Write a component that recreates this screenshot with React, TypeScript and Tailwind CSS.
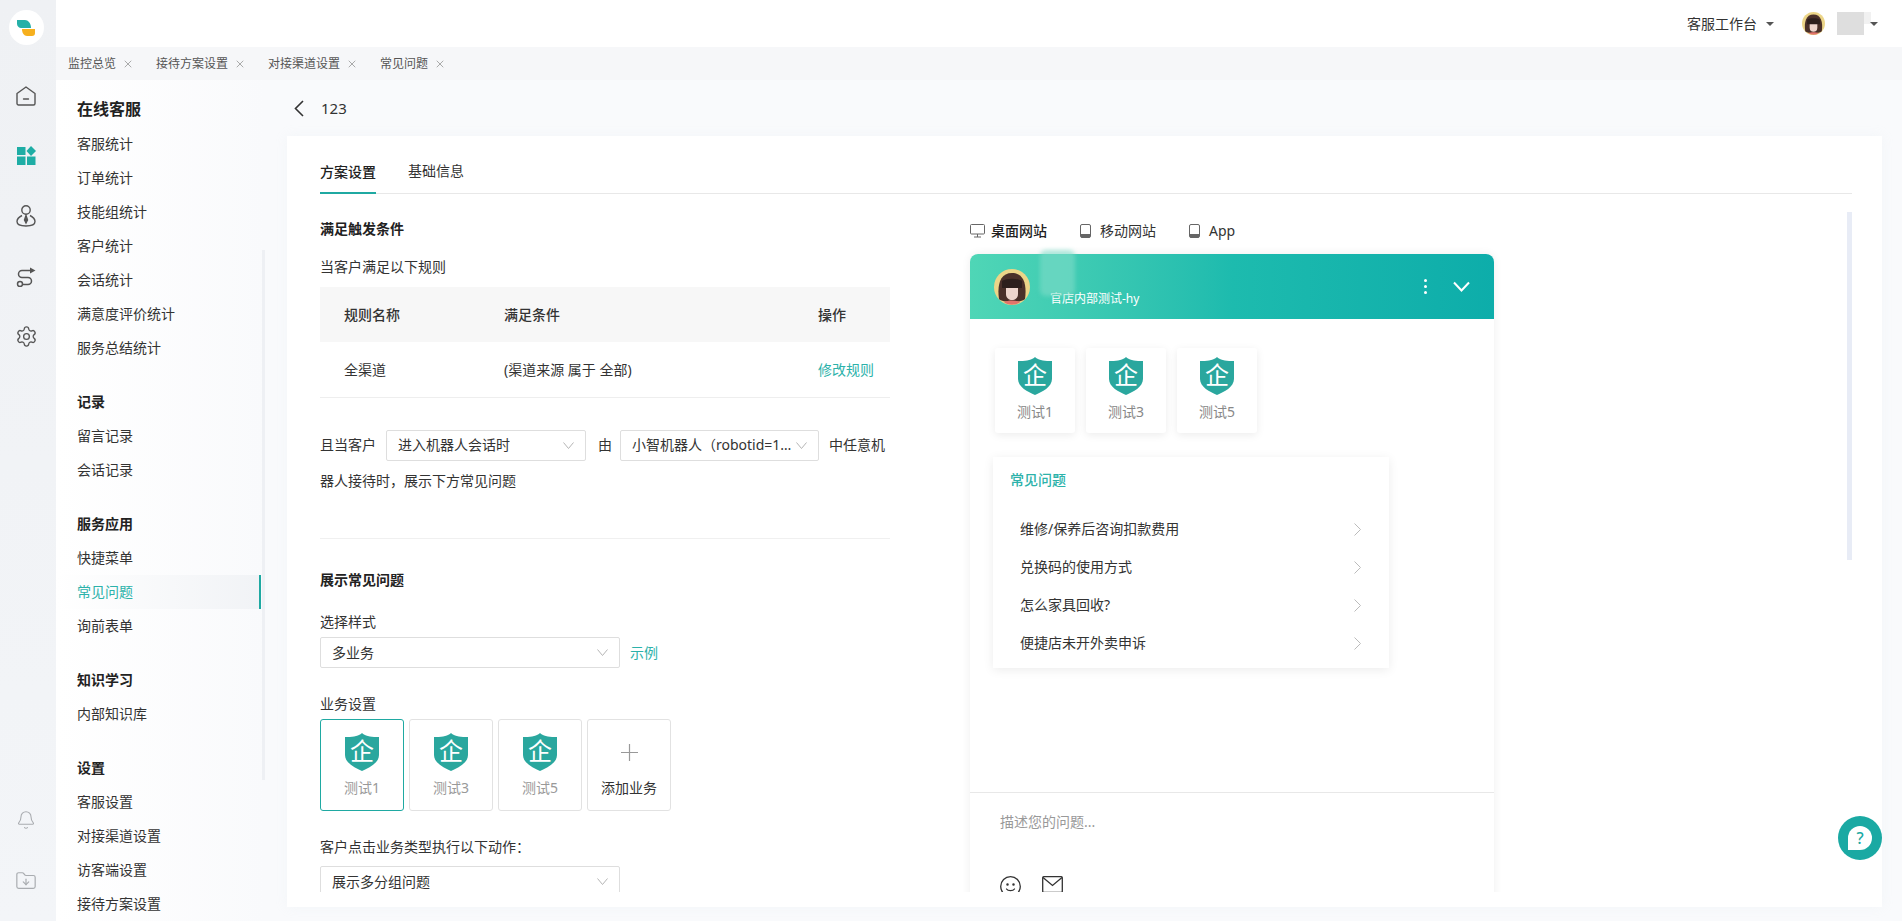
import React from 'react'
import { Bell, FolderDown, Settings, X } from 'lucide-react'

const SIDE_GROUPS = [
  { title: '记录', items: ['留言记录', '会话记录'] },
  { title: '服务应用', items: ['快捷菜单', '常见问题', '询前表单'] },
  { title: '知识学习', items: ['内部知识库'] },
  { title: '设置', items: ['客服设置', '对接渠道设置', '访客端设置', '接待方案设置'] },
]

const STAT_ITEMS = ['客服统计', '订单统计', '技能组统计', '客户统计', '会话统计', '满意度评价统计', '服务总结统计']
const PAGE_TABS = ['监控总览', '接待方案设置', '对接渠道设置', '常见问题']
const FAQ_ITEMS = ['维修/保养后咨询扣款费用', '兑换码的使用方式', '怎么家具回收?', '便捷店未开外卖申诉']

const Shield = () => (
  <div className="relative w-[34px] h-[38px] shrink-0 flex items-center justify-center">
    <svg width="34" height="38" viewBox="0 0 34 38" className="absolute inset-0">
      <path d="M17 0C20 3 27 4.5 34 4V22C34 30 24 35 17 38C10 35 0 30 0 22V4C7 4.5 14 3 17 0Z" fill="#2aa79e" />
    </svg>
    <span className="relative -mt-[3px] text-[24px] leading-[30px] text-white">企</span>
  </div>
)

const Avatar = ({ size }: { size: number }) => (
  <svg width={size} height={size} viewBox="0 0 36 36" className="shrink-0">
    <circle cx="18" cy="18" r="18" fill="#ecd588" />
    <path d="M5 30C3 16 6 4 18 4C30 4 33 16 31 30C28 34 8 34 5 30Z" fill="#4a3029" />
    <path d="M12 18H24V25C24 29 21 31 18 31C15 31 12 29 12 25Z" fill="#eed5cc" />
    <path d="M8 12C13 9 23 9 28 12V19H8Z" fill="#2d1f1c" />
    <path d="M10 33C14 31 22 31 26 33C23 36.5 13 36.5 10 33Z" fill="#e2746c" />
  </svg>
)

const Chevron = () => (
  <svg width="11" height="7" viewBox="0 0 11 7" fill="none" stroke="#b5b5b5" className="shrink-0">
    <path d="M.5.5 5.5 6.5 10.5.5" />
  </svg>
)

const Caret = ({ className }: { className: string }) => (
  <span className={`block w-0 h-0 border-x-[4px] border-x-transparent border-t-[4px] border-t-[#555] ${className}`} />
)

const SelectBox = ({ text, className }: { text: string; className: string }) => (
  <span className={`flex items-center justify-between h-[31px] border border-[#dedede] rounded-[2px] pl-[11px] pr-[11px] leading-[20px] ${className}`}>
    <span className="truncate">{text}</span>
    <span className="ml-[2px] shrink-0"><Chevron /></span>
  </span>
)

const Phone = () => (
  <svg width="11" height="14" viewBox="0 0 11 14" className="shrink-0">
    <rect x=".5" y=".5" width="10" height="13" rx="1.5" fill="none" stroke="#666" />
    <rect x="1" y="10" width="9" height="3.5" fill="#666" />
  </svg>
)

const RailIcons = () => (
  <div className="flex flex-col items-center">
    <svg width="20" height="20" viewBox="0 0 20 20" fill="none" stroke="#555" strokeWidth="1.4" strokeLinejoin="round" strokeLinecap="round" className="mt-[41px]">
      <path d="M10 1 19 7.5V17.5A1.5 1.5 0 0 1 17.5 19H2.5A1.5 1.5 0 0 1 1 17.5V7.5Z" />
      <path d="M7.5 13H12.5" />
    </svg>
    <svg width="19" height="19" viewBox="0 0 19 19" fill="#1eada5" className="mt-[40px]">
      <rect x="0" y="1" width="8.5" height="8" />
      <path d="M14 0 19 5 14 10 9.5 5Z" />
      <rect x="0" y="10.5" width="8.5" height="8.5" />
      <rect x="10" y="10.5" width="8.5" height="8.5" />
    </svg>
    <svg width="20" height="22" viewBox="0 0 20 22" fill="none" stroke="#555" strokeWidth="1.4" className="mt-[40px]">
      <circle cx="10" cy="5" r="4.2" />
      <path d="M6 10.5C3 12 1 14.5 1 16.5 1 19.5 5 21 10 21 15 21 19 19.5 19 16.5 19 14.5 17 12 14 10.5" />
      <path d="M10 10.5 8.5 15 10 18 11.5 15Z" fill="#555" />
    </svg>
    <svg width="20" height="20" viewBox="0 0 20 20" fill="none" stroke="#555" strokeWidth="1.5" className="mt-[40px]">
      <path d="M14 0.5 19.5 3.5 14 6.5Z" fill="#555" stroke="none" />
      <path d="M14 3.5H6A3.5 3.5 0 0 0 6 10.5H12A3.5 3.5 0 0 1 12 17.5H7" />
      <circle cx="4" cy="17" r="2.5" />
    </svg>
    <Settings size={23} strokeWidth={1.4} color="#555" className="mt-[38px]" />
  </div>
)

export default function App() {
  return (
    <div className="relative flex w-[1902px] h-[921px] overflow-hidden bg-[#f9fafc] text-[14px] leading-[20px] text-[#333] font-['Noto_Sans','Noto_Sans_CJK_SC','Liberation_Sans',sans-serif]">
      {/* Left rail */}
      <div className="w-[56px] shrink-0 pr-[4px] flex flex-col items-center bg-gradient-to-b from-[#eff1f4] to-[#f3f5f8]">
        <div className="mt-[10px] w-[35px] h-[35px] rounded-full bg-white flex items-center justify-center">
          <svg width="18" height="16" viewBox="0 0 18 16">
            <path d="M0 0H8C11 0 14 3 14 8H4C2 8 0 6 0 4Z" fill="#26b0a8" />
            <path d="M5 9H18V13C18 15 17 16 15 16H10C7 16 5 13 5 9Z" fill="#f6b01e" />
          </svg>
        </div>
        <RailIcons />
        <Bell size={20} strokeWidth={1.3} color="#a9acb0" className="mt-auto" />
        <FolderDown size={22} strokeWidth={1.3} color="#a9acb0" className="mt-[40px] mb-[29px]" />
      </div>

      <div className="flex-1 flex flex-col min-w-0">
        {/* Top bar */}
        <div className="h-[47px] shrink-0 bg-white flex items-center justify-end pr-[24px]">
          <span>客服工作台</span>
          <Caret className="ml-[9px]" />
          <span className="ml-[28px]"><Avatar size={23} /></span>
          <span className="ml-[12px] w-[27px] h-[23px] bg-[#dedede]" />
          <span className="w-[7px] h-[12px] bg-[#f1f1f1] -mt-[11px]" />
          <Caret className="ml-[-1px]" />
        </div>

        {/* Page tabs */}
        <div className="h-[33px] shrink-0 bg-[#f6f7f9] flex items-center pl-[12px] text-[12px] text-[#555]">
          {PAGE_TABS.map((tab) => (
            <div key={tab} className="flex items-center mr-[22px]">
              <span>{tab}</span>
              <X size={12} strokeWidth={1.4} color="#888" className="ml-[6px]" />
            </div>
          ))}
        </div>

        <div className="flex-1 flex min-h-0">
          {/* Sidebar */}
          <div className="relative w-[209px] shrink-0 pt-[12px] bg-gradient-to-r from-white to-[#f9fafc]">
            <div className="h-[34px] pl-[21px] flex items-center text-[16px] font-bold text-[#222]">在线客服</div>
            <div className="mt-[1px] mb-[1px]">
              {STAT_ITEMS.map((item) => (
                <div key={item} className="h-[34px] pl-[21px] flex items-center">{item}</div>
              ))}
            </div>
            {SIDE_GROUPS.map((group) => (
              <div key={group.title} className="mt-[20px]">
                <div className="h-[34px] pl-[21px] flex items-center font-bold text-[#222]">{group.title}</div>
                {group.items.map((item) =>
                  item === '常见问题' ? (
                    <div key={item} className="h-[34px] w-[205px] pl-[21px] flex items-center text-[#2cb2aa] border-r-[2px] border-[#1fa9a2] bg-gradient-to-r from-white to-[#f1f3f6]">
                      {item}
                    </div>
                  ) : (
                    <div key={item} className="h-[34px] pl-[21px] flex items-center">{item}</div>
                  )
                )}
              </div>
            ))}
            <div className="absolute right-0 top-[170px] w-[3px] h-[530px] bg-[#eef0f4]" />
          </div>

          {/* Main */}
          <div className="flex-1 min-w-0 pl-[22px] pr-[20px]">
            <div className="h-[56px] flex items-center pl-[7px]">
              <svg width="10" height="17" viewBox="0 0 10 17" fill="none" stroke="#333" strokeWidth="1.6">
                <path d="M9 1 1.5 8.5 9 16" />
              </svg>
              <span className="ml-[17px] text-[15px] pb-[1px]">123</span>
            </div>

            <div className="h-[771px] bg-white pl-[33px] pr-[30px] shadow-[0_0_12px_rgba(200,210,225,0.12)]">
              <div className="h-[58px] flex items-end gap-[32px] border-b border-[#e8e8e8]">
                <div className="h-[33px] pt-[1px] -mb-px border-b-[2px] border-[#1fa9a2] text-[#222] font-medium">方案设置</div>
                <div className="h-[33px] pt-[1px]">基础信息</div>
              </div>

              <div className="flex h-[698px] overflow-hidden">
                {/* Rule form */}
                <div className="w-[570px] shrink-0">
                  <div className="mt-[25px] font-bold text-[#222]">满足触发条件</div>
                  <div className="mt-[18px]">当客户满足以下规则</div>
                  <div className="mt-[10px]">
                    <div className="h-[55px] bg-[#f7f7f7] flex items-center pl-[24px] font-medium">
                      <span className="w-[160px]">规则名称</span>
                      <span className="w-[314px]">满足条件</span>
                      <span>操作</span>
                    </div>
                    <div className="h-[56px] border-b border-[#eeeeee] flex items-center pl-[24px]">
                      <span className="w-[160px]">全渠道</span>
                      <span className="w-[314px]">(渠道来源 属于 全部)</span>
                      <span className="text-[#2cb2aa]">修改规则</span>
                    </div>
                  </div>

                  <div className="mt-[29px] flex flex-wrap items-center">
                    <span className="leading-[36px]">且当客户</span>
                    <SelectBox text="进入机器人会话时" className="w-[200px] ml-[10px] mr-[12px]" />
                    <span>由</span>
                    <SelectBox text="小智机器人（robotid=123456）" className="w-[199px] ml-[8px] mr-[10px]" />
                    <span>中任意机</span>
                    <span className="w-full leading-[36px]">器人接待时，展示下方常见问题</span>
                  </div>

                  <div className="mt-[39px] h-px bg-[#f0f0f0]" />

                  <div className="mt-[31px] font-bold text-[#222]">展示常见问题</div>
                  <div className="mt-[22px]">选择样式</div>
                  <div className="mt-[5px] flex items-center">
                    <SelectBox text="多业务" className="w-[300px]" />
                    <span className="ml-[10px] text-[#2cb2aa]">示例</span>
                  </div>

                  <div className="mt-[26px]">业务设置</div>
                  <div className="mt-[5px] flex gap-[5px]">
                    {['测试1', '测试3', '测试5'].map((name, i) => (
                      <div key={name} className={`w-[84px] h-[92px] rounded-[3px] border flex flex-col items-center pt-[13px] ${i === 0 ? 'border-[#1fa9a2]' : 'border-[#e2e2e2]'}`}>
                        <Shield />
                        <span className="mt-[7px] text-[#999]">{name}</span>
                      </div>
                    ))}
                    <div className="w-[84px] h-[92px] rounded-[3px] border border-[#e2e2e2] flex flex-col items-center pt-[13px]">
                      <div className="h-[38px] flex items-center">
                        <svg width="17" height="17" viewBox="0 0 17 17" stroke="#999" strokeWidth="1.2">
                          <path d="M8.5 0V17M0 8.5H17" />
                        </svg>
                      </div>
                      <span className="mt-[7px]">添加业务</span>
                    </div>
                  </div>

                  <div className="mt-[26px]">客户点击业务类型执行以下动作：</div>
                  <div className="mt-[9px]">
                    <SelectBox text="展示多分组问题" className="w-[300px]" />
                  </div>
                </div>

                {/* Preview */}
                <div className="ml-[80px] w-[524px] shrink-0">
                  <div className="mt-[27px] flex items-center h-[20px]">
                    <svg width="15" height="14" viewBox="0 0 15 14" fill="none" stroke="#666" className="shrink-0">
                      <rect x=".5" y=".5" width="14" height="9.5" rx="1" />
                      <path d="M4 13H11M7.5 10V13" />
                    </svg>
                    <span className="ml-[6px] font-medium text-[#222]">桌面网站</span>
                    <span className="ml-[33px]"><Phone /></span>
                    <span className="ml-[9px]">移动网站</span>
                    <span className="ml-[33px]"><Phone /></span>
                    <span className="ml-[9px]">App</span>
                  </div>

                  <div className="mt-[13px] h-[700px] rounded-t-[8px] shadow-[0_0_10px_rgba(0,0,0,0.07)]">
                    <div className="relative h-[65px] rounded-t-[8px] bg-gradient-to-r from-[#4fd6b6] via-[#1dbbae] to-[#0dadaa] flex items-center pl-[24px] pr-[24px]">
                      <Avatar size={36} />
                      <span className="absolute left-[80px] top-[35px] text-[12px] text-white whitespace-nowrap">官店内部测试-hy</span>
                      <span className="absolute left-[70px] top-[-4px] w-[35px] h-[46px] rounded-[6px] bg-[#7fdcc8]/60 blur-[2px]" />
                      <span className="ml-auto flex flex-col gap-[3px]">
                        <span className="w-[3px] h-[3px] rounded-full bg-white" />
                        <span className="w-[3px] h-[3px] rounded-full bg-white" />
                        <span className="w-[3px] h-[3px] rounded-full bg-white" />
                      </span>
                      <svg width="17" height="11" viewBox="0 0 17 11" fill="none" stroke="#fff" strokeWidth="2" className="ml-[26px] mr-0">
                        <path d="M1 1.5 8.5 9.5 16 1.5" />
                      </svg>
                    </div>

                    <div className="h-[474px] border-b border-[#e8e8e8] pt-[29px] pl-[23px]">
                      <div className="pl-[2px] flex gap-[11px]">
                        {['测试1', '测试3', '测试5'].map((name) => (
                          <div key={name} className="w-[80px] h-[85px] rounded-[3px] shadow-[0_2px_8px_rgba(0,0,0,0.08)] flex flex-col items-center pt-[9px]">
                            <Shield />
                            <span className="mt-[7px] text-[#888]">{name}</span>
                          </div>
                        ))}
                      </div>
                      <div className="mt-[24px] w-[396px] h-[211px] pt-[13px] shadow-[0_2px_10px_rgba(0,0,0,0.08)]">
                        <div className="pl-[17px] font-medium text-[#2cb2aa]">常见问题</div>
                        <div className="mt-[20px]">
                          {FAQ_ITEMS.map((item) => (
                            <div key={item} className="h-[38px] pl-[27px] pr-[28px] flex items-center justify-between">
                              <span>{item}</span>
                              <svg width="7" height="13" viewBox="0 0 7 13" fill="none" stroke="#bbb">
                                <path d="M.5.5 6.5 6.5.5 12.5" />
                              </svg>
                            </div>
                          ))}
                        </div>
                      </div>
                    </div>

                    <div className="pt-[19px] pl-[30px]">
                      <div className="text-[#999]">描述您的问题...</div>
                      <div className="mt-[44px] flex gap-[21px]">
                        <svg width="21" height="21" viewBox="0 0 21 21" fill="none" stroke="#333" strokeWidth="1.3" strokeLinecap="round">
                          <circle cx="10.5" cy="10.5" r="9.8" />
                          <circle cx="7.5" cy="8.5" r=".6" fill="#333" />
                          <circle cx="13.5" cy="8.5" r=".6" fill="#333" />
                          <path d="M6.5 13C8 15.2 13 15.2 14.5 13" />
                        </svg>
                        <svg width="21" height="17" viewBox="0 0 21 17" fill="none" stroke="#333" strokeWidth="1.3">
                          <rect x=".7" y=".7" width="19.6" height="15.6" rx="1" />
                          <path d="M1 1.5 10.5 9.5 20 1.5" />
                        </svg>
                      </div>
                    </div>
                  </div>
                </div>

                {/* Preview scrollbar */}
                <div className="ml-auto mt-[18px] w-[5px] h-[348px] shrink-0 bg-[#e8ecf6]" />
              </div>
            </div>
          </div>
        </div>
      </div>

      {/* Help button */}
      <div className="absolute left-[1838px] top-[816px] w-[44px] h-[44px] rounded-full bg-[#1aa9a3] flex items-center justify-center">
        <div className="w-[24px] h-[24px] rounded-full rounded-bl-none bg-white flex items-center justify-center text-[#1aa9a3] font-medium text-[16px]">?</div>
      </div>
    </div>
  )
}
